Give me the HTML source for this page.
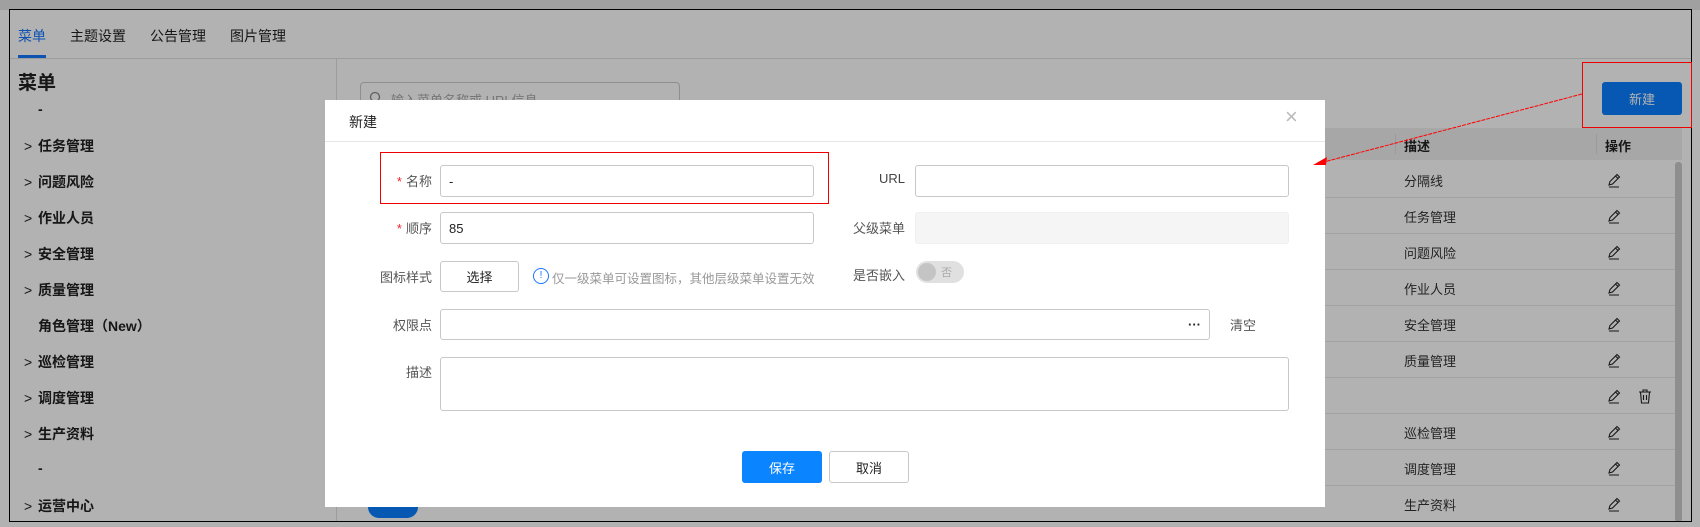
<!DOCTYPE html>
<html><head><meta charset="utf-8"><style>
*{box-sizing:border-box;margin:0;padding:0}
body{width:1700px;height:527px;overflow:hidden;background:#fff;font-family:"Liberation Sans","Noto Sans CJK SC",sans-serif;position:relative;color:#222}
.a{position:absolute}
.frame{left:0;top:0;width:1700px;height:527px;background:#fff}
.mi{position:absolute;left:24px;font-size:14px;font-weight:bold;color:#222}
.mi .c{display:inline-block;width:14px;font-weight:normal}
.row{position:absolute;left:336px;width:1346px;height:36px;border-bottom:1px solid #e8e8e8;font-size:13px}
.row .d{position:absolute;left:1068px;top:9px;color:#333}
.row .e{position:absolute;left:1270px;top:10px}
.ov{left:0;top:0;width:1700px;height:527px;background:rgba(0,0,0,.3)}
.modal{left:325px;top:100px;width:1000px;height:407px;background:#fff}
.lbl{position:absolute;font-size:13px;color:#555;text-align:right;width:90px}
.lbl b{color:#f5222d;font-weight:normal;margin-right:4px}
.inp{position:absolute;border:1px solid #c8c8c8;border-radius:3px;background:#fff;font-size:13px;padding:0 8px;display:flex;align-items:center}
.btn{position:absolute;border-radius:3px;font-size:13px;display:flex;align-items:center;justify-content:center}
</style></head><body>
<div class="a frame">
 <div class="a" style="left:0;top:0;width:1700px;height:10px;background:#e6e6e6"></div>
 <div class="a" style="left:18px;top:26px;font-size:14px;color:#1677ff">菜单</div>
 <div class="a" style="left:18px;top:55px;width:28px;height:3px;background:#1677ff"></div>
 <div class="a" style="left:70px;top:26px;font-size:14px;color:#222">主题设置</div>
 <div class="a" style="left:150px;top:26px;font-size:14px;color:#222">公告管理</div>
 <div class="a" style="left:230px;top:26px;font-size:14px;color:#222">图片管理</div>
 <div class="a" style="left:9px;top:58px;width:1683px;height:1px;background:#e0e0e0"></div>
 <div class="a" style="left:336px;top:58px;width:1px;height:463px;background:#e0e0e0"></div>
 <div class="a" style="left:18px;top:68px;font-size:19px;font-weight:bold">菜单</div>
 <div class="mi" style="top:101px"><span class="c"></span>-</div>
 <div class="mi" style="top:136px"><span class="c">&gt;</span>任务管理</div>
 <div class="mi" style="top:172px"><span class="c">&gt;</span>问题风险</div>
 <div class="mi" style="top:208px"><span class="c">&gt;</span>作业人员</div>
 <div class="mi" style="top:244px"><span class="c">&gt;</span>安全管理</div>
 <div class="mi" style="top:280px"><span class="c">&gt;</span>质量管理</div>
 <div class="mi" style="top:316px"><span class="c"></span>角色管理（New）</div>
 <div class="mi" style="top:352px"><span class="c">&gt;</span>巡检管理</div>
 <div class="mi" style="top:388px"><span class="c">&gt;</span>调度管理</div>
 <div class="mi" style="top:424px"><span class="c">&gt;</span>生产资料</div>
 <div class="mi" style="top:460px"><span class="c"></span>-</div>
 <div class="mi" style="top:496px"><span class="c">&gt;</span>运营中心</div>
 <div class="a" style="left:360px;top:82px;width:320px;height:32px;border:1px solid #ccc;border-radius:4px;font-size:13px;color:#aaa;padding:7px 30px">输入菜单名称或 URL信息</div>
 <svg class="a" style="left:369px;top:91px" width="14" height="14"><circle cx="6" cy="6" r="4.5" fill="none" stroke="#888" stroke-width="1.3"/><line x1="9.5" y1="9.5" x2="13" y2="13" stroke="#888" stroke-width="1.3"/></svg>
 <div class="btn" style="left:1602px;top:82px;width:80px;height:33px;background:#0a7fff;color:#fff">新建</div>
 <div class="a" style="left:336px;top:128px;width:1346px;height:32px;background:#f0f0f0;font-size:13px;font-weight:bold">
  <div class="a" style="left:1059px;top:6px;width:1px;height:20px;background:#ddd"></div>
  <div class="a" style="left:1068px;top:8px">描述</div>
  <div class="a" style="left:1260px;top:6px;width:1px;height:20px;background:#ddd"></div>
  <div class="a" style="left:1269px;top:8px">操作</div>
 </div>
 <div class="row" style="top:162px"><span class="d">分隔线</span><span class="e"><svg width="16" height="16"><path d="M3 13 L4 9.5 L11 2.5 L13.5 5 L6.5 12 Z M9.5 4 L12 6.5 M3 15 H13" fill="none" stroke="#222" stroke-width="1.1"/></svg></span></div>
 <div class="row" style="top:198px"><span class="d">任务管理</span><span class="e"><svg width="16" height="16"><path d="M3 13 L4 9.5 L11 2.5 L13.5 5 L6.5 12 Z M9.5 4 L12 6.5 M3 15 H13" fill="none" stroke="#222" stroke-width="1.1"/></svg></span></div>
 <div class="row" style="top:234px"><span class="d">问题风险</span><span class="e"><svg width="16" height="16"><path d="M3 13 L4 9.5 L11 2.5 L13.5 5 L6.5 12 Z M9.5 4 L12 6.5 M3 15 H13" fill="none" stroke="#222" stroke-width="1.1"/></svg></span></div>
 <div class="row" style="top:270px"><span class="d">作业人员</span><span class="e"><svg width="16" height="16"><path d="M3 13 L4 9.5 L11 2.5 L13.5 5 L6.5 12 Z M9.5 4 L12 6.5 M3 15 H13" fill="none" stroke="#222" stroke-width="1.1"/></svg></span></div>
 <div class="row" style="top:306px"><span class="d">安全管理</span><span class="e"><svg width="16" height="16"><path d="M3 13 L4 9.5 L11 2.5 L13.5 5 L6.5 12 Z M9.5 4 L12 6.5 M3 15 H13" fill="none" stroke="#222" stroke-width="1.1"/></svg></span></div>
 <div class="row" style="top:342px"><span class="d">质量管理</span><span class="e"><svg width="16" height="16"><path d="M3 13 L4 9.5 L11 2.5 L13.5 5 L6.5 12 Z M9.5 4 L12 6.5 M3 15 H13" fill="none" stroke="#222" stroke-width="1.1"/></svg></span></div>
 <div class="row" style="top:378px"><span class="d"></span><span class="e"><svg width="48" height="16"><path d="M3 13 L4 9.5 L11 2.5 L13.5 5 L6.5 12 Z M9.5 4 L12 6.5 M3 15 H13" fill="none" stroke="#222" stroke-width="1.1"/><path d="M33 4 H45 M37 4 V2 H41 V4 M34.5 4 L35.5 15 H42.5 L43.5 4 M37.5 7 V12 M40.5 7 V12" fill="none" stroke="#222" stroke-width="1.1"/></svg></span></div>
 <div class="row" style="top:414px"><span class="d">巡检管理</span><span class="e"><svg width="16" height="16"><path d="M3 13 L4 9.5 L11 2.5 L13.5 5 L6.5 12 Z M9.5 4 L12 6.5 M3 15 H13" fill="none" stroke="#222" stroke-width="1.1"/></svg></span></div>
 <div class="row" style="top:450px"><span class="d">调度管理</span><span class="e"><svg width="16" height="16"><path d="M3 13 L4 9.5 L11 2.5 L13.5 5 L6.5 12 Z M9.5 4 L12 6.5 M3 15 H13" fill="none" stroke="#222" stroke-width="1.1"/></svg></span></div>
 <div class="row" style="top:486px"><span class="d">生产资料</span><span class="e"><svg width="16" height="16"><path d="M3 13 L4 9.5 L11 2.5 L13.5 5 L6.5 12 Z M9.5 4 L12 6.5 M3 15 H13" fill="none" stroke="#222" stroke-width="1.1"/></svg></span></div>
 <div class="a" style="left:368px;top:496px;width:50px;height:22px;border-radius:11px;background:#0a7fff"></div>
 <div class="a" style="left:1675px;top:162px;width:7px;height:360px;background:#ccc;border-radius:3px"></div>
</div>
<div class="a ov"></div>
<div class="a" style="left:9px;top:9px;width:1683px;height:513px;border:1px solid #000"></div>
<div class="a" style="left:1582px;top:62px;width:110px;height:66px;border:1px solid #e00"></div>
<div class="a modal">
 <div class="a" style="left:24px;top:12px;font-size:14px;color:#222">新建</div>
 <div class="a" style="left:960px;top:4px;font-size:22px;color:#bbb;font-weight:300">×</div>
 <div class="a" style="left:0;top:41px;width:1000px;height:1px;background:#e6e6e6"></div>
 <div class="lbl" style="left:17px;top:71px"><b>*</b>名称</div>
 <div class="inp" style="left:115px;top:65px;width:374px;height:32px">-</div>
 <div class="a" style="left:55px;top:52px;width:449px;height:52px;border:1px solid #e00"></div>
 <div class="lbl" style="left:490px;top:71px;color:#444">URL</div>
 <div class="inp" style="left:590px;top:65px;width:374px;height:32px"></div>
 <div class="lbl" style="left:17px;top:118px"><b>*</b>顺序</div>
 <div class="inp" style="left:115px;top:112px;width:374px;height:32px">85</div>
 <div class="lbl" style="left:490px;top:118px">父级菜单</div>
 <div class="inp" style="left:590px;top:112px;width:374px;height:32px;background:#f5f5f5;border-color:#f0f0f0"></div>
 <div class="lbl" style="left:17px;top:167px">图标样式</div>
 <div class="btn" style="left:115px;top:161px;width:79px;height:31px;border:1px solid #c8c8c8;color:#222">选择</div>
 <div class="a" style="left:208px;top:168px;width:16px;height:16px;border:1.5px solid #1677ff;border-radius:50%;font-size:10px;color:#1677ff;text-align:center;line-height:13px">!</div>
 <div class="a" style="left:227px;top:168px;font-size:12.5px;color:#999">仅一级菜单可设置图标，其他层级菜单设置无效</div>
 <div class="lbl" style="left:490px;top:165px">是否嵌入</div>
 <div class="a" style="left:591px;top:161px;width:48px;height:22px;border-radius:11px;background:#e0e0e0"><div class="a" style="left:2px;top:2px;width:18px;height:18px;border-radius:50%;background:#c4c4c4"></div><div class="a" style="left:25px;top:3px;font-size:11px;color:#aaa">否</div></div>
 <div class="lbl" style="left:17px;top:215px">权限点</div>
 <div class="inp" style="left:115px;top:209px;width:770px;height:31px;justify-content:flex-end;font-weight:bold">···</div>
 <div class="a" style="left:905px;top:215px;font-size:13px;color:#555">清空</div>
 <div class="lbl" style="left:17px;top:262px">描述</div>
 <div class="inp" style="left:115px;top:257px;width:849px;height:54px"></div>
 <div class="btn" style="left:417px;top:351px;width:80px;height:32px;background:#0a84ff;color:#fff">保存</div>
 <div class="btn" style="left:504px;top:351px;width:80px;height:32px;border:1px solid #c8c8c8;color:#222">取消</div>
</div>
<svg class="a" style="left:0;top:0" width="1700" height="527"><line x1="1582" y1="94" x2="1320" y2="163" stroke="#f00" stroke-width="1" stroke-dasharray="4,1"/><polygon points="1313,165 1327,157 1326,165" fill="#f00"/></svg>
</body></html>
